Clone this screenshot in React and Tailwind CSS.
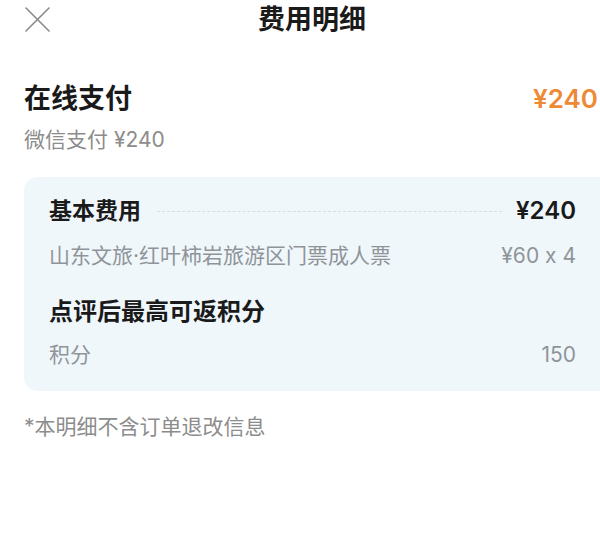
const FONT = {
  fontFamily: '"Inter", "Noto Sans CJK SC", sans-serif',
  fontFeatureSettings: '"calt" 0',
};

function CloseIcon() {
  return (
    <svg width="27" height="27" viewBox="0 0 27 27" fill="none" stroke="#8a8a8a" strokeWidth="1.6" strokeLinecap="round">
      <path d="M2 2l23 23M25 2L2 25" />
    </svg>
  );
}

export default function App() {
  return (
    <div className="w-[600px] h-[547px] bg-white overflow-hidden" style={FONT}>
      <div className="relative h-[40px] flex items-center justify-center">
        <button className="absolute left-[24px] top-[6px]">
          <CloseIcon />
        </button>
        <h1 className="ml-[24px] text-[27px] leading-[36px] font-bold text-[#1a1a1a]">费用明细</h1>
      </div>

      <div className="pl-[24px]">
        <div className="mt-[41px] pr-[2px] flex items-center justify-between">
          <span className="text-[27px] leading-[36px] font-bold text-[#1a1a1a]">在线支付</span>
          <span className="text-[26px] leading-[36px] font-semibold text-[#ee8a35]">¥240</span>
        </div>
        <p className="mt-[9px] text-[21px] leading-[28px] text-[#8c8c8c]">微信支付 ¥240</p>

        <div className="mt-[23px] rounded-l-[14px] bg-[#f0f7fb] pl-[25px] pr-[24px] pt-[19px] pb-[22px]">
          <div className="flex items-center">
            <span className="text-[23px] leading-[30px] font-bold text-[#1a1a1a]">基本费用</span>
            <div className="flex-1 ml-[16px] mr-[14px] border-t border-dashed border-[#d6dde2]" />
            <span className="text-[24px] leading-[30px] font-semibold text-[#1a1a1a]">¥240</span>
          </div>
          <div className="mt-[16px] flex items-center justify-between text-[21px] leading-[28px] text-[#8f9499]">
            <span>山东文旅·红叶柿岩旅游区门票成人票</span>
            <span>¥60 x 4</span>
          </div>
          <div className="mt-[26px] text-[24px] leading-[32px] font-bold text-[#1a1a1a]">点评后最高可返积分</div>
          <div className="mt-[13px] flex items-center justify-between text-[21px] leading-[28px] text-[#8f9499]">
            <span>积分</span>
            <span>150</span>
          </div>
        </div>

        <p className="mt-[22px] text-[21px] leading-[28px] text-[#8c8c8c]">*本明细不含订单退改信息</p>
      </div>
    </div>
  );
}
